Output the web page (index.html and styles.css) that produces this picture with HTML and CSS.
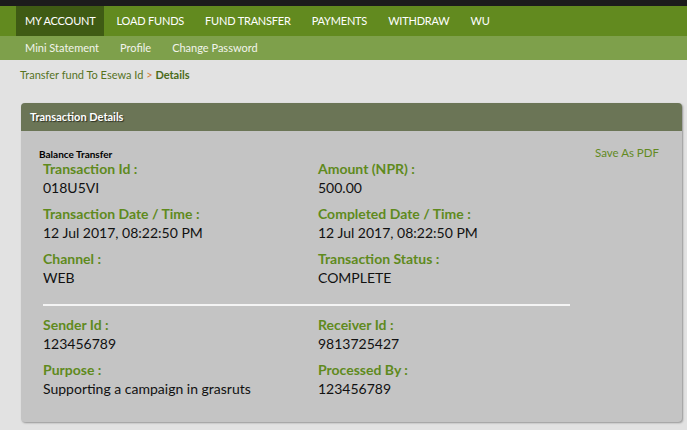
FILE: index.html
```html
<!DOCTYPE html>
<html>
<head>
<meta charset="utf-8">
<link rel="stylesheet" href="styles.css">
</head>
<body>
<div class="topbar"></div>
<nav class="mainnav">
  <a class="nav-item active">MY ACCOUNT</a>
  <a class="nav-item">LOAD FUNDS</a>
  <a class="nav-item">FUND TRANSFER</a>
  <a class="nav-item">PAYMENTS</a>
  <a class="nav-item">WITHDRAW</a>
  <a class="nav-item">WU</a>
</nav>
<nav class="subnav">
  <a class="sub-item">Mini Statement</a>
  <a class="sub-item">Profile</a>
  <a class="sub-item">Change Password</a>
</nav>
<main class="content">
  <div class="breadcrumb">Transfer fund To Esewa Id <span class="sep">&gt;</span> <b>Details</b></div>
  <section class="panel">
    <div class="panel-head">Transaction Details</div>
    <div class="panel-body">
      <div class="body-top">
        <div class="kind">Balance Transfer</div>
        <a class="pdf">Save As PDF</a>
      </div>
      <div class="grid">
        <div class="field"><div class="label">Transaction Id :</div><div class="value">018U5VI</div></div>
        <div class="field"><div class="label">Amount (NPR) :</div><div class="value">500.00</div></div>
        <div class="field"><div class="label">Transaction Date / Time :</div><div class="value">12 Jul 2017, 08:22:50 PM</div></div>
        <div class="field"><div class="label">Completed Date / Time :</div><div class="value">12 Jul 2017, 08:22:50 PM</div></div>
        <div class="field"><div class="label">Channel :</div><div class="value">WEB</div></div>
        <div class="field"><div class="label">Transaction Status :</div><div class="value">COMPLETE</div></div>
      </div>
      <hr class="divider">
      <div class="grid">
        <div class="field"><div class="label">Sender Id :</div><div class="value">123456789</div></div>
        <div class="field"><div class="label">Receiver Id :</div><div class="value">9813725427</div></div>
        <div class="field"><div class="label">Purpose :</div><div class="value">Supporting a campaign in grasruts</div></div>
        <div class="field"><div class="label">Processed By :</div><div class="value">123456789</div></div>
      </div>
    </div>
  </section>
</main>
</body>
</html>
```
FILE: styles.css
```css
* { box-sizing: border-box; }
html, body { margin: 0; padding: 0; }
body {
  width: 687px;
  height: 430px;
  overflow: hidden;
  font-family: Lato, "Liberation Sans", sans-serif;
  background: #e2e2e2;
  color: #111;
}
.topbar {
  height: 6px;
  background: #1c1c1c;
}
.mainnav {
  display: flex;
  gap: 4px;
  height: 30px;
  padding-left: 16px;
  background: #628a1f;
}
.nav-item {
  display: flex;
  align-items: center;
  padding: 0 8px 1px 9px;
  font-size: 11px;
  letter-spacing: -0.2px;
  color: #fff;
}
.nav-item.active {
  background: #3f5b14;
}
.subnav {
  display: flex;
  gap: 3px;
  height: 24px;
  padding-left: 16px;
  background: #7ea04b;
}
.sub-item {
  display: flex;
  align-items: center;
  padding: 0 9px 2px;
  font-size: 11px;
  color: #f2f4ec;
}
.content {
  padding: 7px 5px 0 21px;
}
.breadcrumb {
  margin-left: -1px;
  font-size: 11px;
  color: #56731f;
  height: 36px;
  line-height: 15px;
}
.breadcrumb .sep { color: #d6803a; }
.breadcrumb b { color: #4a6b19; }
.panel {
  width: 661px;
  height: 319px;
  border-radius: 4px;
  background: #c4c4c4;
  box-shadow: 1px 1px 2px rgba(0,0,0,0.35);
  overflow: hidden;
}
.panel-head {
  height: 28px;
  background: #6b7556;
  color: #fff;
  font-size: 11px;
  font-weight: 700;
  padding: 7px 9px 0;
  text-shadow: 1px 1px 1px rgba(0,0,0,0.6);
}
.panel-body {
  padding: 17px 0 0 22px;
}
.body-top {
  display: flex;
  justify-content: space-between;
  width: 616px;
}
.kind {
  margin-left: -4px;
  font-size: 10px;
  font-weight: 700;
  color: #000;
}
.pdf {
  font-size: 11.5px;
  color: #628a1f;
  margin-top: -2px;
}
.grid {
  display: grid;
  grid-template-columns: 275px 275px;
  row-gap: 8px;
}
.label {
  font-size: 14px;
  font-weight: 700;
  color: #5f8a1d;
  line-height: 18px;
}
.value {
  font-size: 14px;
  color: #111;
  line-height: 18px;
  padding-top: 1px;
}
.divider {
  width: 527px;
  margin: 17px 0 10px;
  border: 0;
  height: 2px;
  background: #f4f4f4;
}
```
